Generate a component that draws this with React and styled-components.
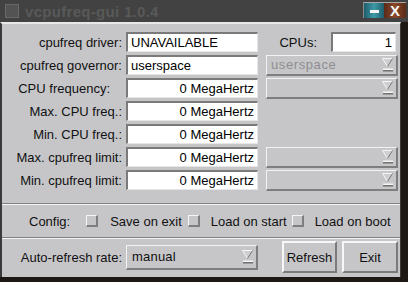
import React from "react";
import styled, { createGlobalStyle } from "styled-components";

const GlobalStyle = createGlobalStyle`
  html, body { margin: 0; padding: 0; background: #1d1813; }
  body { font-family: "Liberation Sans", Arial, sans-serif; }
  * { box-sizing: border-box; }
`;

const Screen = styled.div`
  width: 408px;
  height: 282px;
  display: flex;
  flex-direction: column;
  background: #1d1813;
  overflow: hidden;
`;

const TitleBar = styled.div`
  height: 22px;
  flex: none;
  display: flex;
  align-items: center;
  background: #424242;
  padding-left: 5px;
`;

const TitleIcon = styled.div`
  width: 14px;
  height: 14px;
  border: 1px solid #686868;
  background: #535353;
  margin-right: 6px;
`;

const TitleText = styled.span`
  font-weight: bold;
  font-size: 15px;
  color: #595959;
  letter-spacing: 0.3px;
`;

const WinButtons = styled.div`
  margin-left: auto;
  margin-right: 2px;
  align-self: flex-start;
  margin-top: 2px;
  display: flex;
  border-top: 1px solid #a8a8a8;
  border-left: 1px solid #8a8a8a;
`;

const WinButton = styled.div`
  width: ${(p) => p.$w}px;
  height: 15px;
  display: flex;
  align-items: center;
  justify-content: center;
  background: ${(p) => p.$bg};
`;

const MinBar = styled.div`
  width: 9px;
  height: 3px;
  background: #f4f4f4;
  margin-top: 2px;
`;

const CloseX = styled.span`
  color: #f6f6f6;
  font-weight: bold;
  font-size: 15px;
  line-height: 15px;
`;

const Main = styled.div`
  flex: 1;
  display: flex;
`;

const Body = styled.div`
  width: 401px;
  height: 255px;
  flex: none;
  display: flex;
  flex-direction: column;
  background: #c6c6c9;
  border-left: 2px solid #3a3a3a;
  border-right: 1px solid #3a3a3a;
  border-top: 2px solid #e8e8e8;
`;

const Section = styled.div`
  padding: ${(p) => p.$pad};
  flex: none;
  height: ${(p) => p.$h}px;
`;

const Groove = styled.div`
  flex: none;
  height: 2px;
  border-top: 1px solid #808080;
  border-bottom: 1px solid #f4f4f4;
`;

const FormGrid = styled.div`
  display: grid;
  grid-template-columns: 124px 140px 132px;
  grid-auto-rows: 20px;
  row-gap: 3px;
  align-items: center;
`;

const Label = styled.div`
  font-size: 13px;
  color: #111;
  text-align: right;
  padding-right: ${(p) => (p.$extra ? 4 + p.$extra : 4)}px;
  white-space: nowrap;
`;

const Field = styled.div`
  width: ${(p) => p.$w || 132}px;
  height: 20px;
  background: #ffffff;
  border-style: solid;
  border-width: 2px 1px 1px 2px;
  border-color: #7a7a7a #e6e6e6 #e6e6e6 #7a7a7a;
  font-size: 13px;
  color: #000;
  line-height: 17px;
  padding: 0 3px;
  text-align: ${(p) => (p.$right ? "right" : "left")};
  white-space: nowrap;
  overflow: hidden;
`;

const CpuCell = styled.div`
  display: flex;
  align-items: center;
  justify-content: flex-end;
  gap: 10px;
  padding-right: 2px;
`;

const Dropdown = styled.div`
  width: ${(p) => p.$w || 132}px;
  height: ${(p) => p.$h || 21}px;
  display: flex;
  align-items: center;
  border-style: solid;
  border-width: 1px 2px 2px 1px;
  border-color: #f2f2f2 #7e7e7e #7e7e7e #f2f2f2;
  background: #c6c6c9;
  font-size: 13px;
  color: ${(p) => (p.$disabled ? "#8e8e90" : "#111")};
  padding: 0 3px 0 ${(p) => (p.$disabled ? 4 : 5)}px;
  letter-spacing: ${(p) => (p.$disabled ? "0.6px" : "0.2px")};
`;

const DropText = styled.span`
  flex: 1;
  white-space: nowrap;
`;

const Arrow = () => (
  <svg width="11" height="14" viewBox="0 0 11 14">
    <path d="M0.5 0.5 H10.5 L5.5 8.5 Z" fill="#cfcfd2" stroke="#f4f4f4" />
    <path d="M10.5 0.5 L5.5 8.5" stroke="#6a6a6a" fill="none" />
    <rect x="1" y="10.5" width="10" height="1.5" fill="#f6f6f6" />
    <rect x="1" y="12" width="10" height="1.5" fill="#707070" />
  </svg>
);

const ConfigRow = styled.div`
  display: flex;
  align-items: center;
  height: 100%;
  padding-left: 27px;
  font-size: 13px;
  color: #111;
  white-space: nowrap;
`;

const ConfigText = styled.span`
  flex: none;
  white-space: nowrap;
`;

const Check = styled.div`
  width: 12px;
  height: 12px;
  flex: none;
  background: #c6c6c9;
  border-style: solid;
  border-width: 1px 2px 2px 1px;
  border-color: #f4f4f4 #7e7e7e #7e7e7e #f4f4f4;
  margin: 0 ${(p) => p.$r}px 0 ${(p) => p.$l}px;
`;

const BottomRow = styled.div`
  display: flex;
  align-items: center;
  height: 100%;
`;

const BottomLabel = styled.div`
  width: 124px;
  text-align: right;
  padding-right: 4px;
  font-size: 13px;
  color: #111;
  white-space: nowrap;
`;

const Button = styled.div`
  width: ${(p) => p.$w}px;
  height: 32px;
  margin-left: ${(p) => p.$ml}px;
  display: flex;
  align-items: center;
  justify-content: center;
  background: #c6c6c9;
  border-style: solid;
  border-width: 2px;
  border-color: #f6f6f6 #7a7a7a #7a7a7a #f6f6f6;
  font-size: 13px;
  color: #111;
`;

const Desktop = styled.div`
  flex: 1;
  background: #1d1813;
`;

const rows = [
  { label: "CPU frequency:", extra: 12, drop: true },
  { label: "Max. CPU freq.:" },
  { label: "Min. CPU freq.:" },
  { label: "Max. cpufreq limit:", drop: true },
  { label: "Min. cpufreq limit:", drop: true },
];

export default function App() {
  return (
    <>
      <GlobalStyle />
      <Screen>
        <TitleBar>
          <TitleIcon />
          <TitleText>vcpufreq-gui 1.0.4</TitleText>
          <WinButtons>
            <WinButton $w={20} $bg="linear-gradient(90deg,#1f5c6a,#3d9aa8 50%,#1f5c6a)">
              <MinBar />
            </WinButton>
            <WinButton $w={22} $bg="linear-gradient(90deg,#5a2a18,#8a4828 50%,#5a2a18)">
              <CloseX>X</CloseX>
            </WinButton>
          </WinButtons>
        </TitleBar>
        <Main>
          <Body>
            <Section $pad="8px 0 0 0" $h={179}>
              <FormGrid>
                <Label>cpufreq driver:</Label>
                <Field>UNAVAILABLE</Field>
                <CpuCell>
                  <Label>CPUs:</Label>
                  <Field $w={65} $right>1</Field>
                </CpuCell>

                <Label>cpufreq governor:</Label>
                <Field>userspace</Field>
                <Dropdown $disabled>
                  <DropText>userspace</DropText>
                  <Arrow />
                </Dropdown>

                {rows.map((r) => (
                  <React.Fragment key={r.label}>
                    <Label $extra={r.extra}>{r.label}</Label>
                    <Field $right>0 MegaHertz</Field>
                    {r.drop ? (
                      <Dropdown $disabled>
                        <DropText />
                        <Arrow />
                      </Dropdown>
                    ) : (
                      <div />
                    )}
                  </React.Fragment>
                ))}
              </FormGrid>
            </Section>
            <Groove />
            <Section $pad="0" $h={32}>
              <ConfigRow>
                <ConfigText>Config:</ConfigText>
                <Check $l={16} $r={12} />
                <ConfigText>Save on exit</ConfigText>
                <Check $l={6} $r={11} />
                <ConfigText>Load on start</ConfigText>
                <Check $l={5} $r={11} />
                <ConfigText>Load on boot</ConfigText>
              </ConfigRow>
            </Section>
            <Groove />
            <Section $pad="0" $h={36}>
              <BottomRow>
                <BottomLabel>Auto-refresh rate:</BottomLabel>
                <Dropdown $w={132} $h={25}>
                  <DropText>manual</DropText>
                  <Arrow />
                </Dropdown>
                <Button $w={55} $ml={24}>Refresh</Button>
                <Button $w={56} $ml={5}>Exit</Button>
              </BottomRow>
            </Section>
          </Body>
          <Desktop />
        </Main>
      </Screen>
    </>
  );
}
